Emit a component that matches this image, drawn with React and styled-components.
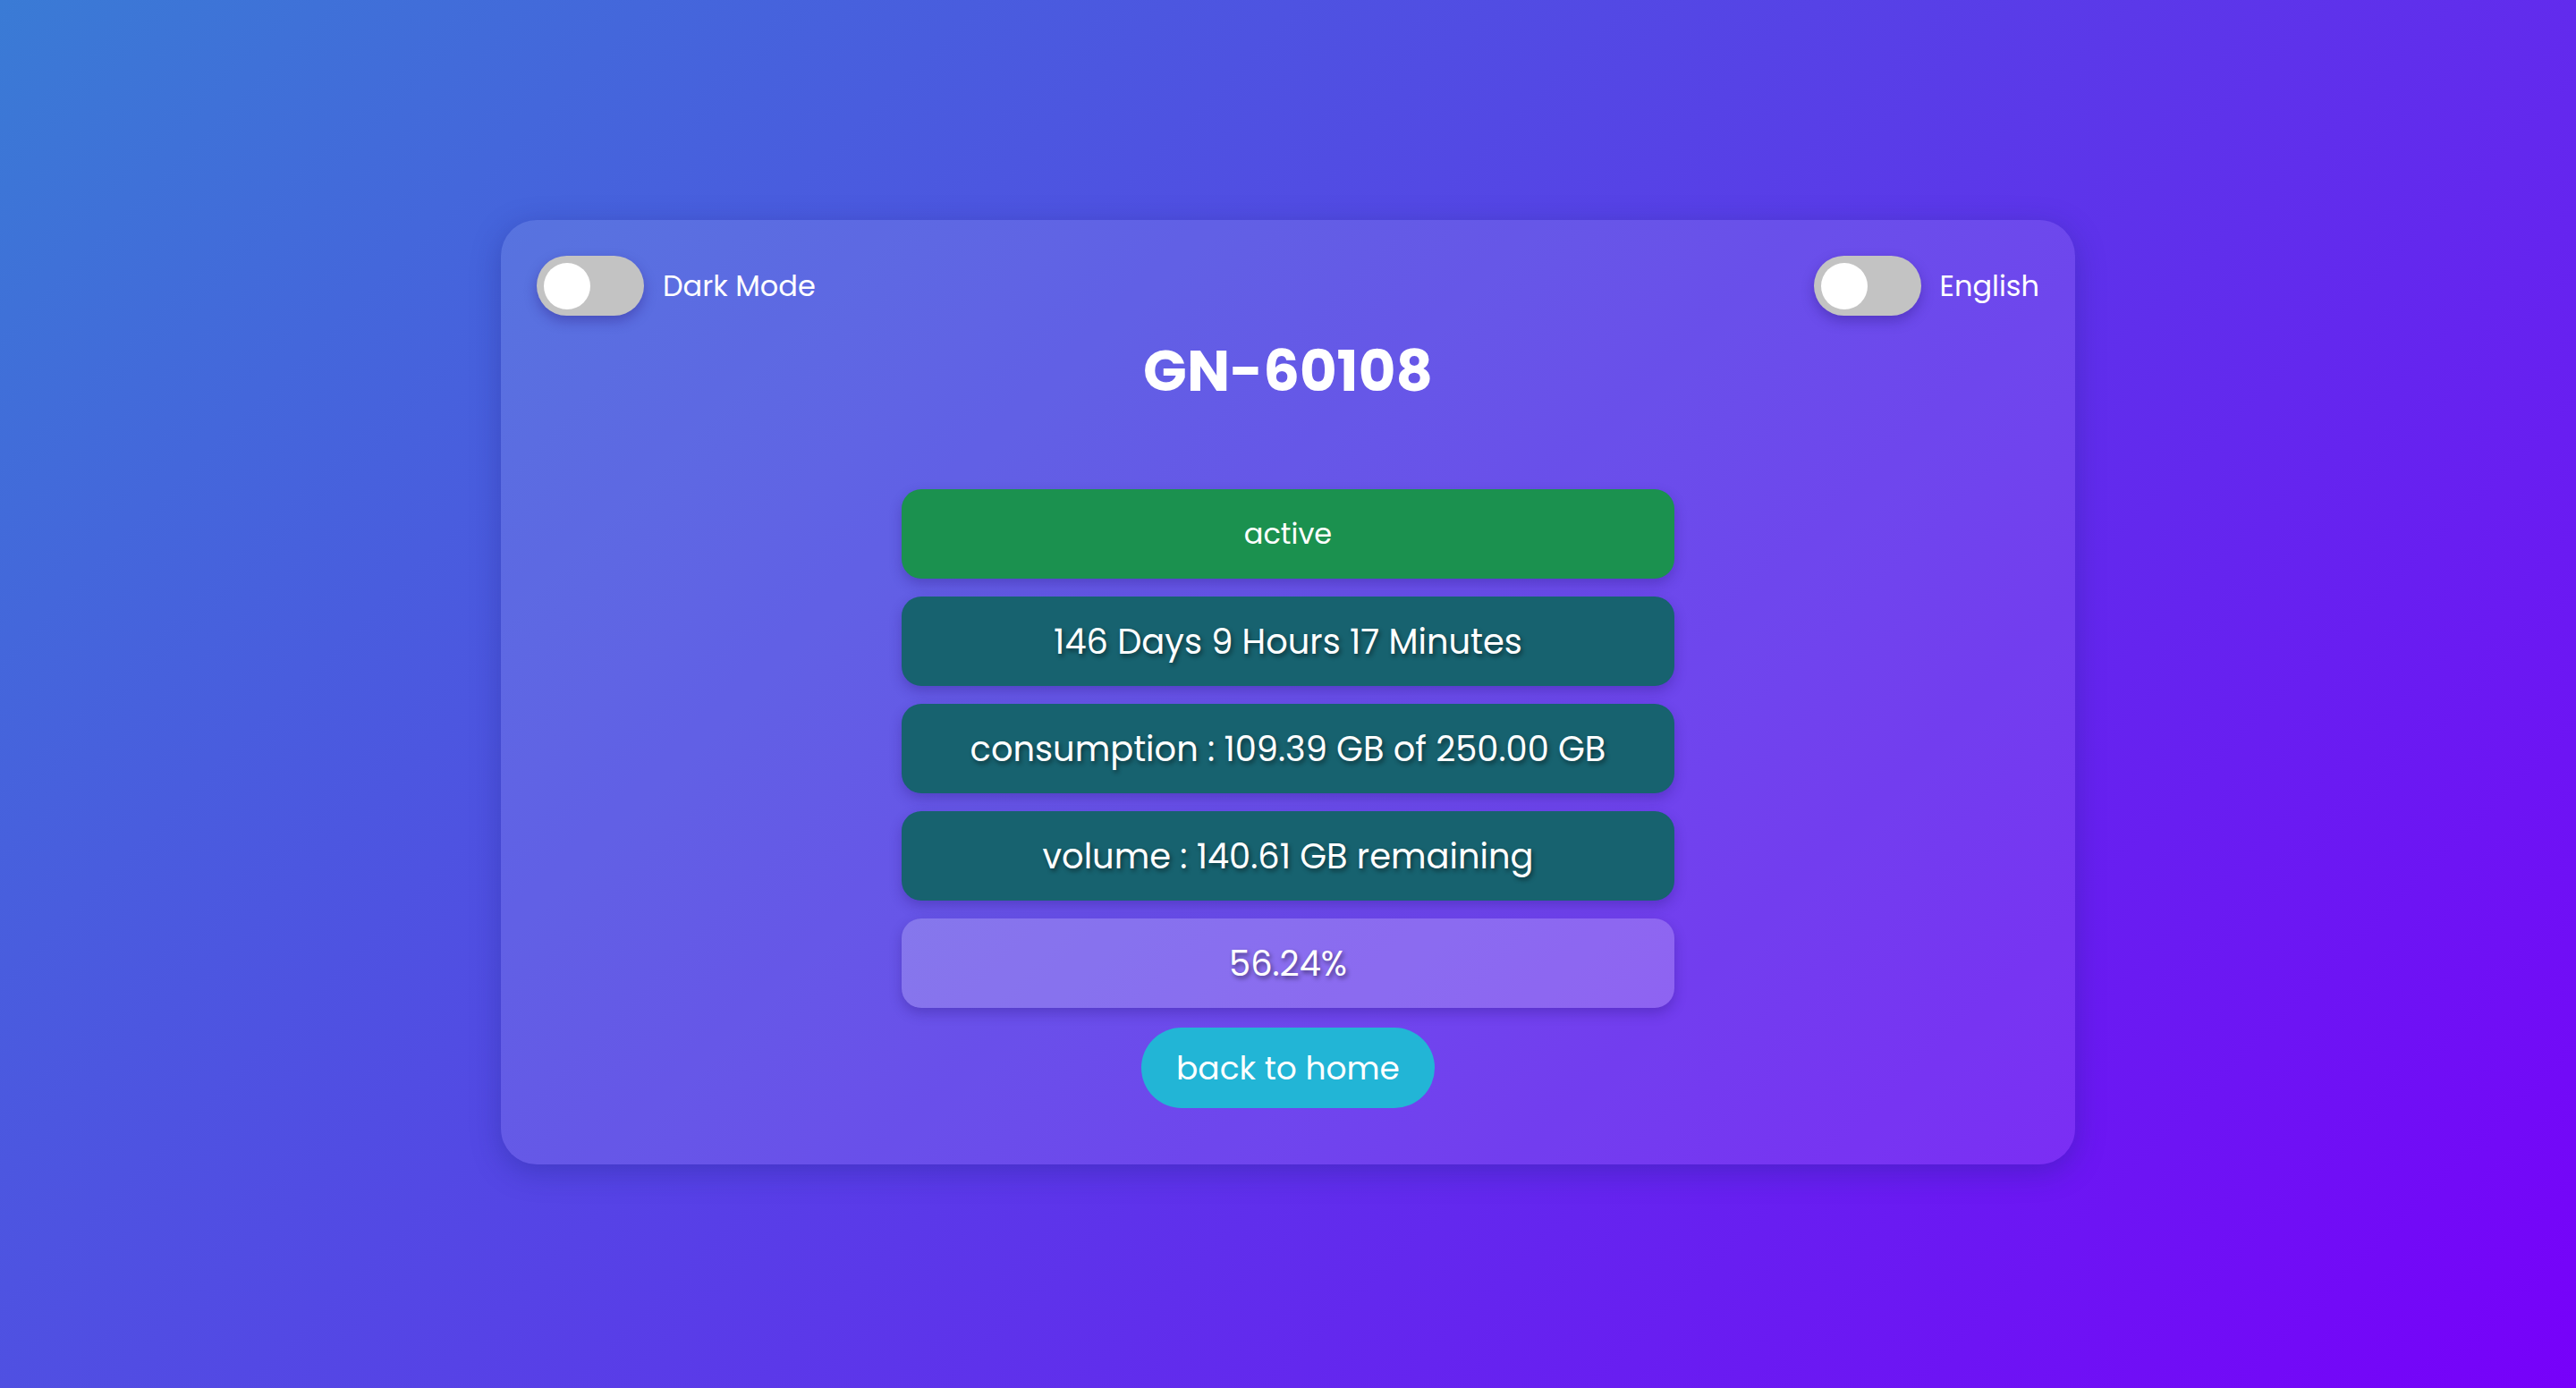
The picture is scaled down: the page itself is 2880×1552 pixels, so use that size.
import React, { useState } from "react";
import styled, { createGlobalStyle } from "styled-components";

const GlobalStyle = createGlobalStyle`
  * {
    box-sizing: border-box;
  }
  body {
    margin: 0;
    font-family: "Poppins", Inter, "Noto Sans", sans-serif;
    color: #fff;
  }
`;

const Page = styled.div`
  display: flex;
  align-items: center;
  justify-content: center;
  min-height: 100vh;
  padding-bottom: 4px;
  background: linear-gradient(135deg, #3a7bd5 0%, #7700fa 100%);
`;

const Card = styled.div`
  width: 1760px;
  padding: 40px 40px 63px;
  border-radius: 40px;
  background: rgba(255, 255, 255, 0.1);
  box-shadow: 0 8px 32px 0 rgba(31, 38, 135, 0.37);
  display: flex;
  flex-direction: column;
  align-items: center;
`;

const TopBar = styled.div`
  width: 100%;
  height: 67px;
  display: flex;
  align-items: center;
  justify-content: space-between;
`;

const ToggleGroup = styled.label`
  display: flex;
  align-items: center;
  gap: 21px;
  cursor: pointer;
`;

const Track = styled.span`
  position: relative;
  width: 120px;
  height: 67px;
  border-radius: 34px;
  background: ${(p) => (p.$on ? "#22b5d6" : "#c3c3c3")};
  box-shadow: 0 6px 14px rgba(40, 20, 120, 0.35);
  transition: background 0.2s;
`;

const Knob = styled.span`
  position: absolute;
  top: 8px;
  left: ${(p) => (p.$on ? "60px" : "8px")};
  width: 52px;
  height: 52px;
  border-radius: 50%;
  background: #fff;
  transition: left 0.2s;
`;

const ToggleText = styled.span`
  font-size: 32px;
  line-height: 1;
`;

const Title = styled.h1`
  margin: 22px 0 92px;
  font-size: 64px;
  line-height: 80px;
  font-weight: 700;
`;

const Rows = styled.div`
  width: 864px;
  display: flex;
  flex-direction: column;
  gap: 20px;
`;

const Row = styled.div`
  height: 100px;
  border-radius: 22px;
  display: flex;
  align-items: center;
  justify-content: center;
  background: ${(p) => p.$bg};
  font-size: ${(p) => (p.$small ? "32px" : "38.4px")};
  text-shadow: ${(p) => (p.$shadow ? "2px 3px 5px rgba(0, 0, 0, 0.45)" : "none")};
  box-shadow: 0 6px 14px rgba(40, 20, 120, 0.3);
`;

const HomeButton = styled.button`
  margin-top: 22px;
  width: 328px;
  height: 90px;
  border: none;
  border-radius: 45px;
  background: #22b5d6;
  color: #fff;
  font-family: inherit;
  font-size: 36px;
  cursor: pointer;
`;

const Toggle = ({ label, on, onToggle }) => (
  <ToggleGroup onClick={onToggle}>
    <Track $on={on}>
      <Knob $on={on} />
    </Track>
    <ToggleText>{label}</ToggleText>
  </ToggleGroup>
);

const App = () => {
  const [dark, setDark] = useState(false);
  const [lang, setLang] = useState(false);

  return (
    <>
      <GlobalStyle />
      <Page>
        <Card>
          <TopBar>
            <Toggle label="Dark Mode" on={dark} onToggle={() => setDark(!dark)} />
            <Toggle label="English" on={lang} onToggle={() => setLang(!lang)} />
          </TopBar>
          <Title>GN-60108</Title>
          <Rows>
            <Row $bg="#1b914f" $small>
              active
            </Row>
            <Row $bg="#17626f" $shadow>
              146 Days 9 Hours 17 Minutes
            </Row>
            <Row $bg="#17626f" $shadow>
              consumption : 109.39 GB of 250.00 GB
            </Row>
            <Row $bg="#17626f" $shadow>
              volume : 140.61 GB remaining
            </Row>
            <Row $bg="rgba(255, 255, 255, 0.2)" $shadow>
              56.24%
            </Row>
          </Rows>
          <HomeButton>back to home</HomeButton>
        </Card>
      </Page>
    </>
  );
};

export default App;
